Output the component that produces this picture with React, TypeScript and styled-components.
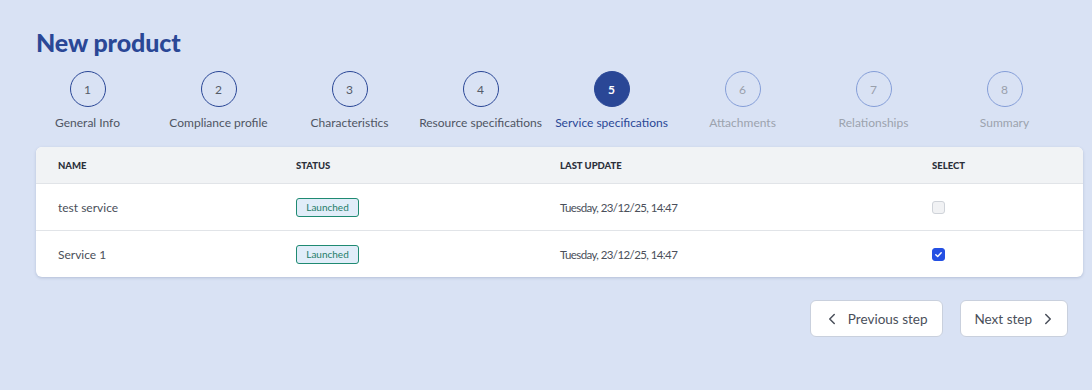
import React, { useState } from 'react'
import styled, { createGlobalStyle } from 'styled-components'
import { FiChevronLeft, FiChevronRight } from 'react-icons/fi'

const GlobalStyle = createGlobalStyle`
    body {
        margin: 0;
        background: #d9e2f4;
        font-family: Lato, "Noto Sans", sans-serif;
    }
`

const steps = [
    'General Info',
    'Compliance profile',
    'Characteristics',
    'Resource specifications',
    'Service specifications',
    'Attachments',
    'Relationships',
    'Summary',
]

const services = [
    { name: 'test service', status: 'Launched', updated: 'Tuesday, 23/12/25, 14:47', selected: false },
    { name: 'Service 1', status: 'Launched', updated: 'Tuesday, 23/12/25, 14:47', selected: true },
]

type StepState = 'done' | 'active' | 'todo'

const App = () => {
    const [rows, setRows] = useState(services)
    const current = 4

    const toggle = (i: number) => {
        setRows(rows.map((r, j) => (j === i ? { ...r, selected: !r.selected } : r)))
    }

    return (
        <Page>
            <GlobalStyle />
            <Title>New product</Title>
            <Stepper>
                {steps.map((label, i) => {
                    const state: StepState = i < current ? 'done' : i === current ? 'active' : 'todo'
                    return (
                        <Step key={label}>
                            <Circle $state={state}>{i + 1}</Circle>
                            <StepLabel $state={state}>{label}</StepLabel>
                        </Step>
                    )
                })}
            </Stepper>
            <Table>
                <HeaderRow>
                    <HeadCell>Name</HeadCell>
                    <HeadCell>Status</HeadCell>
                    <HeadCell>Last update</HeadCell>
                    <HeadCell>Select</HeadCell>
                </HeaderRow>
                {rows.map((r, i) => (
                    <Row key={r.name}>
                        <Cell>{r.name}</Cell>
                        <Cell>
                            <Badge>{r.status}</Badge>
                        </Cell>
                        <DateCell>{r.updated}</DateCell>
                        <Cell>
                            <Checkbox $checked={r.selected} onClick={() => toggle(i)}>
                                {r.selected && (
                                    <svg width="9" height="9" viewBox="0 0 10 10">
                                        <path d="M2 5.2 L4.1 7.2 L8 3" fill="none" stroke="#fff" strokeWidth="1.6" strokeLinecap="round" strokeLinejoin="round" />
                                    </svg>
                                )}
                            </Checkbox>
                        </Cell>
                    </Row>
                ))}
            </Table>
            <Actions>
                <Button $icon="left">
                    <FiChevronLeft size={18} />
                    Previous step
                </Button>
                <Button $icon="right">
                    Next step
                    <FiChevronRight size={18} />
                </Button>
            </Actions>
        </Page>
    )
}

const Page = styled.div`
    padding: 28px 9px 40px 36px;
    display: flex;
    flex-direction: column;
`

const Title = styled.h1`
    margin: 0;
    font-size: 25px;
    line-height: 28px;
    font-weight: 900;
    color: #2a4796;
    letter-spacing: -0.1px;
`

const Stepper = styled.div`
    display: grid;
    grid-template-columns: repeat(8, 131px);
    margin: 15px 0 0 -14px;
`

const Step = styled.div`
    display: flex;
    flex-direction: column;
    align-items: center;
    gap: 8px;
`

const Circle = styled.div<{ $state: StepState }>`
    width: 36px;
    height: 36px;
    box-sizing: border-box;
    border-radius: 50%;
    display: flex;
    align-items: center;
    justify-content: center;
    font-size: 12px;
    border: 1.5px solid ${p => (p.$state === 'todo' ? '#859ed8' : '#2a4796')};
    background: ${p => (p.$state === 'active' ? '#2a4796' : 'transparent')};
    color: ${p => (p.$state === 'active' ? '#ffffff' : p.$state === 'done' ? '#555b68' : '#99a0ac')};
    font-weight: ${p => (p.$state === 'active' ? 700 : 400)};
`

const StepLabel = styled.div<{ $state: StepState }>`
    font-size: 12px;
    line-height: 16px;
    white-space: nowrap;
    color: ${p => (p.$state === 'active' ? '#2a4796' : p.$state === 'done' ? '#4f5563' : '#9ca3ae')};
`

const Table = styled.div`
    margin-top: 16px;
    width: 1047px;
    background: #ffffff;
    border-radius: 6px;
    overflow: hidden;
    box-shadow: 0 1px 3px hsl(220deg 30% 40% / 0.25);
`

const HeaderRow = styled.div`
    display: grid;
    grid-template-columns: 238px 264px 372px 1fr;
    height: 36px;
    align-items: center;
    background: #f1f3f5;
    padding-left: 22px;
`

const HeadCell = styled.div`
    font-size: 9.5px;
    font-weight: 900;
    text-transform: uppercase;
    color: #2b2f3a;
`

const Row = styled.div`
    display: grid;
    grid-template-columns: 238px 264px 372px 1fr;
    height: 46px;
    align-items: center;
    padding-left: 22px;
    border-top: 1px solid #e1e4e8;
`

const Cell = styled.div`
    font-size: 12px;
    color: #4a4f5a;
    display: flex;
    align-items: center;
`

const DateCell = styled(Cell)`
    font-size: 11.5px;
    letter-spacing: -0.6px;
`

const Badge = styled.span`
    display: inline-flex;
    align-items: center;
    justify-content: center;
    box-sizing: border-box;
    width: 63px;
    height: 19px;
    border: 1px solid #1f8a72;
    border-radius: 3px;
    background: #e1edf9;
    color: #1f7d68;
    font-size: 10px;
`

const Checkbox = styled.span<{ $checked: boolean }>`
    width: 13px;
    height: 13px;
    box-sizing: border-box;
    border-radius: 3px;
    display: inline-flex;
    align-items: center;
    justify-content: center;
    cursor: pointer;
    background: ${p => (p.$checked ? '#2450e3' : '#f1f2f4')};
    border: 1px solid ${p => (p.$checked ? '#2450e3' : '#cfd3d9')};
`

const Actions = styled.div`
    display: flex;
    justify-content: flex-end;
    gap: 17px;
    width: 1032px;
    margin-top: 23px;
`

const Button = styled.button<{ $icon: 'left' | 'right' }>`
    height: 37px;
    padding: ${p => (p.$icon === 'left' ? '0 15px 0 12px' : '0 10px 0 13px')};
    display: inline-flex;
    align-items: center;
    gap: 7px;
    background: #ffffff;
    border: 1px solid #c9d0dd;
    border-radius: 6px;
    font-family: inherit;
    font-size: 13.5px;
    color: #4a4f5a;
    cursor: pointer;
`

export default App
